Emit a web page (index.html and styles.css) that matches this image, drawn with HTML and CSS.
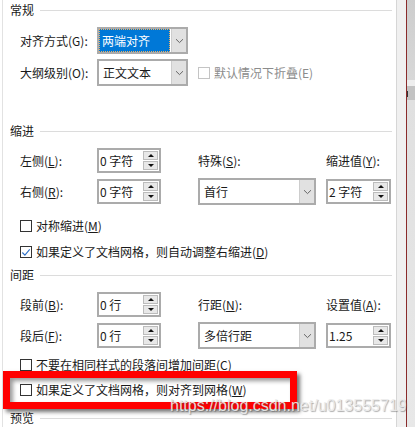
FILE: index.html
```html
<!DOCTYPE html>
<html lang="zh-CN">
<head>
<meta charset="utf-8">
<title>段落</title>
<link rel="stylesheet" href="styles.css">
</head>
<body>
<div class="window">
  <div class="dialog">
    <div class="section-head"><span>常规</span><i class="rule"></i></div>
    <div class="grid general">
      <span class="label c1">对齐方式(G):</span>
      <div class="combo focus c2">
        <span class="value"><span class="sel">两端对齐</span></span>
        <span class="btn"><svg width="9" height="6" viewBox="0 0 9 6"><path d="M1 1.2 L4.5 4.6 L8 1.2" fill="none" stroke="#666" stroke-width="1"/></svg></span>
      </div>
      <span class="label c1">大纲级别(O):</span>
      <div class="combo c2">
        <span class="value">正文文本</span>
        <span class="btn"><svg width="9" height="6" viewBox="0 0 9 6"><path d="M1 1.2 L4.5 4.6 L8 1.2" fill="none" stroke="#666" stroke-width="1"/></svg></span>
      </div>
      <label class="check disabled c4"><span class="box"></span>默认情况下折叠(E)</label>
    </div>

    <div class="section-head s2"><span>缩进</span><i class="rule"></i></div>
    <div class="grid fields">
      <span class="label c1">左侧(<u>L</u>):</span>
      <div class="spin c2"><span class="val">0 字符</span><span class="arrows"><span class="up"></span><span class="down"></span></span></div>
      <span class="label c4">特殊(<u>S</u>):</span>
      <span class="label c6">缩进值(<u>Y</u>):</span>
      <span class="label c1">右侧(<u>R</u>):</span>
      <div class="spin c2"><span class="val">0 字符</span><span class="arrows"><span class="up"></span><span class="down"></span></span></div>
      <div class="combo c4">
        <span class="value">首行</span>
        <span class="btn"><svg width="9" height="6" viewBox="0 0 9 6"><path d="M1 1.2 L4.5 4.6 L8 1.2" fill="none" stroke="#666" stroke-width="1"/></svg></span>
      </div>
      <div class="spin c6"><span class="val">2 字符</span><span class="arrows"><span class="up"></span><span class="down"></span></span></div>
    </div>
    <label class="check sym"><span class="box"></span>对称缩进(<u>M</u>)</label>
    <label class="check grid-indent"><span class="box checked"><svg width="11" height="11" viewBox="0 0 11 11"><path d="M1.5 5.5 L4.3 8.4 L9.6 2" fill="none" stroke="#2b6fc7" stroke-width="1.2"/></svg></span>如果定义了文档网格，则自动调整右缩进(<u>D</u>)</label>

    <div class="section-head s3"><span>间距</span><i class="rule"></i></div>
    <div class="grid fields">
      <span class="label c1">段前(<u>B</u>):</span>
      <div class="spin c2"><span class="val">0 行</span><span class="arrows"><span class="up"></span><span class="down"></span></span></div>
      <span class="label c4">行距(<u>N</u>):</span>
      <span class="label c6">设置值(<u>A</u>):</span>
      <span class="label c1">段后(<u>F</u>):</span>
      <div class="spin c2"><span class="val">0 行</span><span class="arrows"><span class="up"></span><span class="down"></span></span></div>
      <div class="combo c4">
        <span class="value">多倍行距</span>
        <span class="btn"><svg width="9" height="6" viewBox="0 0 9 6"><path d="M1 1.2 L4.5 4.6 L8 1.2" fill="none" stroke="#666" stroke-width="1"/></svg></span>
      </div>
      <div class="spin c6"><span class="val">1.25</span><span class="arrows"><span class="up"></span><span class="down"></span></span></div>
    </div>
    <label class="check nospace"><span class="box"></span>不要在相同样式的段落间增加间距(<u>C</u>)</label>
    <label class="check snap"><span class="box"></span>如果定义了文档网格，则对齐到网格(<u>W</u>)<span class="highlight"></span></label>

    <div class="section-head s4"><span>预览</span><i class="rule"></i></div>
  </div>
  <div class="gutter"></div>
  <div class="frame-line"></div>
  <div class="backdrop"><span class="mark"></span></div>
  <span class="watermark">https://blog.csdn.net/u013555719</span>
</div>
</body>
</html>
```
FILE: styles.css
```css
* { box-sizing: border-box; }
html, body { margin: 0; padding: 0; }
body {
  width: 415px;
  height: 427px;
  overflow: hidden;
  background: #fff;
  font-family: "Noto Sans CJK SC", "Microsoft YaHei", sans-serif;
  font-size: 12px;
  color: #1a1a1a;
}
u { text-decoration: underline; text-underline-offset: 1px; }

.window { display: flex; height: 427px; position: relative; }

.dialog {
  margin-left: 2px;
  width: 395px;
  border-left: 1px solid #e2e2e2;
  border-right: 1px solid #d6d6d6;
  padding: 2px 4px 0 0;
  background: #fff;
}
.gutter { width: 9px; background: #f0f0f0; }
.frame-line { width: 1px; background: #8a2b2b; }
.backdrop {
  flex: 1;
  position: relative;
  background: linear-gradient(to bottom, #cdcdcd 0, #d8d8d8 80px, #eeeeee 80px, #eeeeee 86px, #c3c3c3 86px, #c3c3c3 100px, #e0e0e0 100px, #e8e8e8 427px);
}
.backdrop .mark {
  position: absolute;
  left: 0;
  top: 91px;
  width: 1px;
  height: 6px;
  background: #333;
}

.section-head {
  display: flex;
  align-items: center;
  height: 16px;
  line-height: 16px;
  padding-left: 7px;
}
.section-head .rule {
  flex: 1;
  height: 1px;
  background: #dcdcdc;
  margin-left: 6px;
}
.s2 { margin-top: 37px; }
.s3 { margin-top: 8px; }
.s4 { margin-top: 13px; }

.grid {
  display: grid;
  margin: 9px 0 0 17px;
  row-gap: 5px;
  align-items: center;
}
.general {
  grid-template-columns: 77px 91px 10px auto;
  grid-template-rows: 27px 27px;
}
.fields {
  grid-template-columns: 77px 64px 37px 118px 10px 65px;
  grid-template-rows: 25px 27px;
}
.c1 { grid-column: 1; }
.c2 { grid-column: 2; }
.c4 { grid-column: 4; }
.c6 { grid-column: 6; }

.label { line-height: 16px; white-space: nowrap; }

.combo {
  display: flex;
  height: 27px;
  border: 2px solid #ababab;
  background: #fff;
}
.combo .value {
  flex: 1;
  display: flex;
  align-items: center;
  padding-left: 4px;
  white-space: nowrap;
}
.combo .btn {
  width: 15px;
  background: #e1e1e1;
  border-left: 1px solid #cdcdcd;
  display: flex;
  align-items: center;
  justify-content: center;
}
.combo.focus .value { padding: 0 1px 0 0; }
.combo .sel {
  flex: 1;
  align-self: stretch;
  display: flex;
  align-items: center;
  padding-left: 3px;
  background: #0078d7;
  color: #fff;
  outline: 1px dotted #f0b060;
  outline-offset: -1px;
}

.spin {
  display: flex;
  height: 25px;
  border: 2px solid #ababab;
  background: #fff;
}
.spin .val {
  flex: 1;
  display: flex;
  align-items: center;
  padding-left: 1px;
  white-space: nowrap;
}
.spin .arrows {
  width: 16px;
  display: flex;
  flex-direction: column;
  gap: 1px;
  padding: 1px 1px 1px 0;
}
.arrows span {
  flex: 1;
  background: #e8e8e8;
  border: 1px solid #bcbcbc;
  display: flex;
  align-items: center;
  justify-content: center;
}
.arrows .up::before {
  content: "";
  border-left: 3px solid transparent;
  border-right: 3px solid transparent;
  border-bottom: 3px solid #111;
}
.arrows .down::before {
  content: "";
  border-left: 3px solid transparent;
  border-right: 3px solid transparent;
  border-top: 3px solid #111;
}

.check {
  display: flex;
  align-items: center;
  height: 14px;
  line-height: 14px;
  margin-left: 17px;
  white-space: nowrap;
}
.grid .check { margin-left: 0; }
.check .box {
  width: 12px;
  height: 12px;
  flex: none;
  border: 1px solid #333;
  background: #fff;
  margin-right: 4px;
  display: flex;
  align-items: center;
  justify-content: center;
}
.check.disabled { color: #8c8c8c; }
.check.disabled .box { border-color: #c4c4c4; }

.sym { margin-top: 14px; }
.grid-indent { margin-top: 12px; }
.nospace { margin-top: 9px; }
.snap { margin-top: 11px; position: relative; }

.highlight {
  position: absolute;
  left: -17px;
  top: -12px;
  width: 294px;
  height: 38px;
  border: 7px solid #ff0000;
  box-shadow: 3px 3px 4px rgba(0, 0, 0, 0.55), inset 3px 3px 4px rgba(0, 0, 0, 0.4);
  pointer-events: none;
}

.watermark {
  position: absolute;
  left: 170px;
  top: 397px;
  font-family: "Liberation Sans", Arial, sans-serif;
  font-size: 16px;
  line-height: 18px;
  color: rgba(236, 236, 236, 0.92);
  text-shadow: 1px 1px 1px rgba(70, 70, 70, 0.45);
  white-space: nowrap;
}
```
